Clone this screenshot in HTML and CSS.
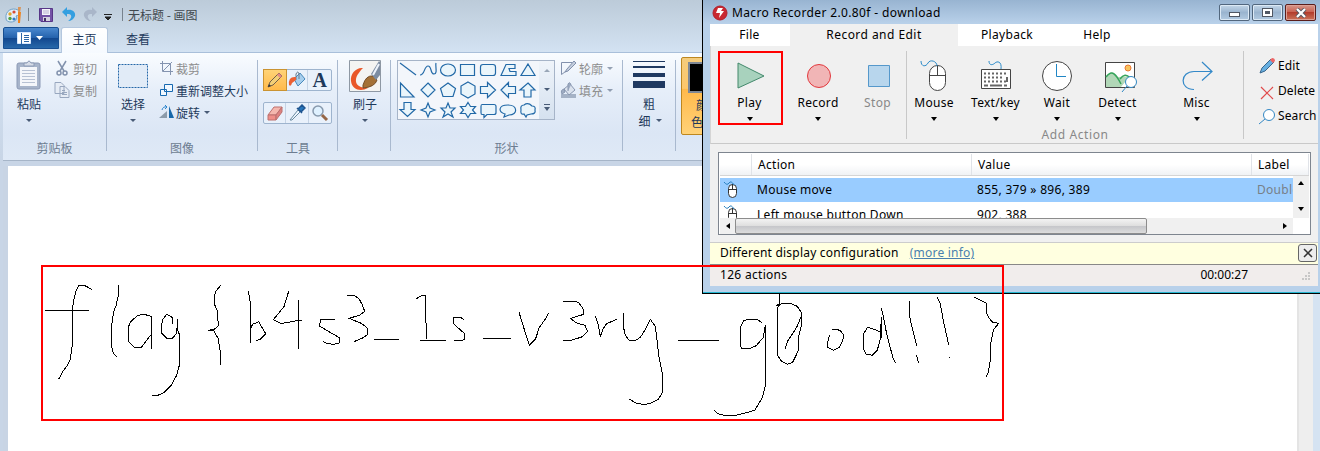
FILE: index.html
```
<!DOCTYPE html>
<html lang="zh-CN">
<head>
<meta charset="utf-8">
<title>无标题 - 画图</title>
<link rel="stylesheet" href="styles.css">
</head>
<body>
<div class="desktop">
<main class="paint">
  <header class="titlebar">
    <svg class="app-icon" width="18" height="18" viewBox="0 0 18 18"><path d="M1 12C0 5 7 1 13 4c3 3 2 5-2 6 2 3-1 6-5 6-3 0-5-1-5-4Z" fill="#e3eef7" stroke="#6fa0c7"/><circle cx="5" cy="8" r="1.7" fill="#e3a32c"/><circle cx="9" cy="6" r="1.6" fill="#d84b35"/><circle cx="5" cy="12.5" r="1.7" fill="#4f9f43"/><circle cx="9" cy="13" r="1.6" fill="#347ac4"/><path d="m13 1 3 0-1 6-2 0Z" fill="#d99559"/><path d="M13 6h3l-1 11h-2Z" fill="#ee8420"/></svg>
    <i class="title-sep"></i>
    <svg class="save" width="14" height="14" viewBox="0 0 14 14"><path d="M.5.5h13v13H2l-1.500-1.500Z" fill="#7452a6" stroke="#573687"/><path d="M3 1h8v6H3z" fill="#f4f3fa"/><path d="M4 3h6M4 5h6" stroke="#b9b0cf"/><path d="M4 9h7v4H4z" fill="#d4d1df"/><path d="M5 10h2v3H5z" fill="#443064"/></svg>
    <svg class="undo" width="14" height="15" viewBox="0 0 14 15"><path d="M0 5 5 0v3c5-1 9 2 8 6-1 3-4 5-7 5 3-2 5-6 1-7H5v3Z" fill="#349fe0"/></svg>
    <svg class="redo" width="14" height="15" viewBox="0 0 14 15"><path d="M14 5 9 0v3C4 2 0 5 1 9c1 3 4 5 7 5-3-2-5-6-1-7h2v3Z" fill="#a9b6c9"/></svg>
    <svg class="quick" width="8" height="7" viewBox="0 0 8 7"><path d="M0 .5h8M1 3h6L4 6Z" stroke="#222" fill="#222"/></svg>
    <i class="title-sep"></i>
    <span>无标题 - 画图</span>
  </header>
  <nav class="tabs">
    <button class="file-tab"><svg width="28" height="13" viewBox="0 0 28 13"><path d="M.5.5h13v11H.5z" fill="#fff" stroke="#d4e7ff"/><path d="M4.500 1v11" stroke="#2c66a7"/><path d="M7 3.500h5M7 5.500h5M7 7.500h5M7 9.500h5" stroke="#2c66a7"/><path d="M19 4h7l-3.500 4Z" fill="#fff"/></svg></button>
    <span class="tab current">主页</span><span class="tab">查看</span>
  </nav>
  <section class="ribbon">
    <div class="group clipboard">
      <div class="tools-row">
        <div class="big paste">
          <svg width="26" height="31" viewBox="0 0 26 31"><rect x="1" y="3" width="23" height="26" rx="2" fill="#a7b4ca" stroke="#8c9ab5"/><path d="M4 7h17v19H4z" fill="#f4f6fa"/><path d="M8 6V3h3q2-4 4 0h3v3Z" fill="#d6dce7" stroke="#8c9ab5"/><path d="M6 10.500h13M6 13.500h13M6 16.500h13M6 19.500h13M6 22.500h13" stroke="#b7c1d3"/></svg>
          <span>粘贴</span><i class="arrow"></i></div>
        <div class="commands off">
          <div><svg width="16" height="16" viewBox="0 0 16 16" fill="none" stroke="#8292ad" stroke-width="1.500"><path d="m4 1 6 10M12 1 6 11"/><circle cx="5" cy="13" r="2"/><circle cx="11" cy="13" r="2"/></svg>剪切</div>
          <div><svg width="16" height="16" viewBox="0 0 16 16" fill="#e6ecf5" stroke="#98a7bf"><path d="M1 .5h6l3 3v8H1ZM6 4.500h5l4 4v7H6Z"/><path d="M8 8.500h3M8 10.500h5M8 12.500h5"/></svg>复制</div>
        </div>
      </div><span class="group-name">剪贴板</span>
    </div>
    <div class="group image">
      <div class="tools-row">
        <div class="big"><svg width="32" height="31" viewBox="0 0 32 31"><path d="M1.500 4.500h29v23h-29z" fill="#e1ebf7" stroke="#2467a8" stroke-dasharray="2 1"/></svg><span>选择</span><i class="arrow"></i></div>
        <div class="commands">
          <div class="off"><svg width="16" height="16" viewBox="0 0 16 16" fill="none" stroke="#8494b0"><path d="M1 3.500h10.500V15M3.500 1v10.500H14M4 11l9-9"/></svg>裁剪</div>
          <div><svg width="16" height="16" viewBox="0 0 16 16" fill="#f1f8ff" stroke="#1769b0"><path d="M5.500 2.500h8v7h-8zM1.500 7.500h6v6h-6z"/></svg>重新调整大小</div>
          <div><svg width="16" height="16" viewBox="0 0 16 16"><path d="M0 14 8 7v7Z" fill="#8c9baa"/><path d="m10 2 5 12h-5Z" fill="#1768aa"/><path d="M3 6q1-4 5-3M6 1l2 2-2 2" fill="none" stroke="#2c86cf"/></svg>旋转<i class="arrow"></i></div>
        </div>
      </div><span class="group-name">图像</span>
    </div>
    <div class="group tools">
      <div class="tool-stack">
        <div class="tool-row">
          <span class="tool active"><svg width="18" height="18" viewBox="0 0 18 18"><path d="m2 16 2-5 9-9 3 3-9 9Z" fill="#f3cf76" stroke="#725f48"/><path d="m11 4 2-2 3 3-2 2Z" fill="#e48a83"/><path d="m2 16 1-3 2 2Z" fill="#333"/></svg></span>
          <span class="tool"><svg width="19" height="18" viewBox="0 0 19 18"><path d="m7 8 6-6 5 6-7 7Z" fill="#a8cfee" stroke="#4889bb"/><path d="M9 9V3q2-4 3 0v5" fill="none" stroke="#687b8b"/><path d="M9 6Q1 5 2 14q2 2 3-2l4-3Z" fill="#ec6033"/></svg></span>
          <span class="tool letter">A</span>
        </div>
        <div class="tool-row">
          <span class="tool"><svg width="18" height="18" viewBox="0 0 18 18"><path d="m2 11 6-8h8l-6 8Z" fill="#f4b7ae" stroke="#bc706e"/><path d="M2 11h8v5H2Z" fill="#ef8e88" stroke="#bc706e"/><path d="m10 11 6-8v5l-6 8Z" fill="#dd8180" stroke="#bc706e"/></svg></span>
          <span class="tool"><svg width="18" height="18" viewBox="0 0 18 18"><path d="m2 16 8-10 2 2-8 8Z" fill="#eef7ff" stroke="#69899f"/><path d="m9 4 5 5M10 5l4-4 3 3-4 4Z" fill="#2776bb" stroke="#1f548f" stroke-width="1.500"/></svg></span>
          <span class="tool"><svg width="18" height="18" viewBox="0 0 18 18"><circle cx="7" cy="7" r="5" fill="#dff1ff" stroke="#8799ad" stroke-width="1.500"/><path d="m11 11 5 5" stroke="#956747" stroke-width="3"/></svg></span>
        </div>
      </div><span class="group-name">工具</span>
    </div>
    <div class="group brush"><div class="big"><svg width="32" height="32" viewBox="0 0 32 32"><path d="M.5.5h31v31H.5z" fill="#f4f4f2" stroke="#8e98a4"/><path d="M14 8C7 7 1 14 2 21c1 9 10 11 17 7-8 0-13-3-12-9 1-5 4-7 5-9Z" fill="#e95829"/><path d="M14 25q3-10 10-9l4 4q-2 7-14 8Z" fill="#a47136" stroke="#744d27"/><path d="m22 14 8-13 1 1v13l-4 5Z" fill="#7d8da2"/><path d="m24 15 6-11" stroke="#edf3fb" stroke-width="2"/></svg><span>刷子</span><i class="arrow"></i></div></div>
    <div class="group shapes">
      <div class="shape-body">
        <div class="gallery">
          <svg width="141" height="58" viewBox="398 61 141 58" fill="#eaf5fb" stroke="#2269a7" stroke-width="1.200"><path d="m400 63 16 12"/><path d="M420 75c5 0 4-9 8-9s2 8 6 8 1-8 2-11" fill="none"/><ellipse cx="448" cy="70" rx="7.500" ry="6"/><path d="M460.500 64.500h14v11h-14z"/><rect x="480.500" y="64.500" width="15" height="11" rx="2.500"/><path d="M501 75.500 506 64.500h9v4h-6l1 3h6v4ZM528 64l7 11.500h-14ZM400.500 83v14H414ZM428 83l7 7-7 7-7-7ZM448 83l7.500 5.500-2.500 8h-10l-2.500-8ZM468 82l7 4v8l-7 4-7-4v-8ZM480.500 86.500h7v-4l8 7.500-8 7.500v-4h-7ZM515.500 86.500h-7v-4L501 90l7.500 7.500v-4h7ZM528 83l7 7h-4v7h-7v-7h-4ZM404 102.500h7v7h4l-7.500 7-7.500-7h4ZM428 103l2 5 5 2-5 2-2 5-2-5-5-2 5-2ZM448 103l2 5h5l-4 4 2 5-5-3-5 3 2-5-4-4h5ZM468 102.500l2.500 4h5l-3 3.500 3 3.500h-5l-2.500 4-2.500-4h-5l3-3.500-3-3.500h5Z"/><path d="M482 104.500h12q2 0 2 2v6q0 2-2 2h-7l-3 3v-3h-2q-1 0-1-2v-6q0-2 1-2Z"/><path d="M505 114l-1 3 5-2c9 0 9-10-1-10s-10 7-3 9Z"/><path d="M524 105q4-3 8 1 4 0 3 4 1 4-4 4l-4 1-1 2-2-3q-4 1-3-4-1-5 3-5Z"/></svg>
          <div class="gallery-scroll"><i class="arrow up"></i><i class="arrow"></i><i class="arrow more"></i></div>
        </div>
        <div class="commands off">
          <div><svg width="17" height="16" viewBox="0 0 17 16" fill="none" stroke="#8291ad"><path d="M12 2.500H1.500v12L9 9"/><path d="m7 9 7-8 2 2-8 8-3 1Z" fill="#c4cedd"/></svg>轮廓<i class="arrow"></i></div>
          <div><svg width="17" height="16" viewBox="0 0 17 16"><path d="M1 12h15v4H1z" fill="#a5b2c6"/><path d="m4 7 6-5 5 6-6 5Z" fill="#dbe2ed" stroke="#8997b0"/><path d="M8 9V2q2-3 3 1M4 7Q0 8 2 12l3-2Z" fill="#9eacc3" stroke="#8997b0"/></svg>填充<i class="arrow"></i></div>
        </div>
      </div><span class="group-name">形状</span>
    </div>
    <div class="group size"><svg width="32" height="28" viewBox="0 0 32 28"><path d="M0 0h32v1H0zM0 5h32v2H0zM0 12h32v4H0zM0 20h32v7H0z" fill="#1f3961"/></svg><span>粗</span><span class="size-last">细<i class="arrow"></i></span></div>
    <div class="color"><i class="swatch"></i><span>颜</span><span class="color-last">色</span></div>
  </section>
  <section class="workspace">
    <div class="canvas">
      <svg class="drawing" width="1289" height="285" viewBox="8 166 1289 285">
        <g transform="translate(30 255) scale(.333333)">
          <path d="M185 103 165 92 147 91 137 110 131 138 127 165V270L121 313 112 331 98 350 88 370H84M45 166H177M266 90V117L258 153 251 170 245 212V275L250 295 260 305M364 281V184L342 178 323 181 302 200 295 216V259L313 277H334L362 240M428 206V188L410 178 399 193 394 213V234L410 250H427L440 235 443 191V225L448 238V331L439 363 424 390 401 413 383 421H367M572 91 558 108 553 124V147L562 167 565 212 554 222 535 226 552 228 564 250 571 290V329M655 108 661 145V263M661 222 668 208 686 200 707 236 691 253 679 257M776 109 762 155 730 194 753 206 805 196H815M805 135V281"/>
        </g>
        <g transform="translate(280 255) scale(.333333)">
          <path d="M164 193H123L118 213 178 248V264L160 268 139 265 129 259M202 121H223L237 131 247 150 254 169 238 181 207 190 244 205 263 220V239L246 250 222 260M282 253H357M409 131 427 121H437V152L439 252M420 256H498M551 193 541 187H520V206L553 235V253L546 256H522M609 250H693M717 171 725 198 748 271 765 254 778 216"/>
        </g>
        <g transform="translate(530 255) scale(.333333)">
          <path d="M0 269 17 252 27 219 46 192 56 174M99 139H134L146 143 159 161 161 178 122 190 137 203 165 211 173 230 155 246 127 255 99 258M196 183 204 207 211 244 219 222 230 206 260 193M280 174V215L286 240 297 256H317L331 247 346 223 361 193 375 213 380 245 386 301 394 340 398 359V410L386 432 361 445 341 449 318 444 297 432M444 256H567M696 203 682 193H652L640 198 632 215V274L635 281H657L679 272 700 247 706 211V391L697 428 675 465 650 473 617 481H584L564 476 552 465"/>
        </g>
        <g transform="translate(770 255) scale(.333333)">
          <path d="M28 116V151H18L39 145H62L82 154 95 174V209L87 239 85 287 68 322 52 328 35 319 22 300V170L25 151M95 181 80 217 53 258 45 282M186 223H201L212 228 221 240 218 258 209 276 191 286 174 278 172 264 179 240M334 232 313 223 293 217 280 237V282L288 297 307 301 322 285 331 251 334 186V248M334 159 339 179 350 237 369 309 377 324M418 137V181L428 225 440 272M439 300 446 324M501 126 511 147 522 207 531 246 536 270M612 126 649 145V174L656 188 667 201 686 205 670 225 662 267V310L654 355 648 365"/><path d="M537 307h3"/>
        </g>
      </svg>
    </div>
    <aside class="paint-scroll"></aside><aside class="paint-edge"></aside>
  </section>
</main>
<section class="macro">
  <header class="macro-title">
    <svg width="16" height="16" viewBox="0 0 16 16"><circle cx="8" cy="8" r="7" fill="#c92831" stroke="#b11f2b"/><path d="M6 3h5L9 6h3l-5 7 1-5H4Z" fill="#fff"/></svg>
    <span>Macro Recorder 2.0.80f - download</span>
    <div class="window-buttons"><button><i></i></button><button><i class="max"></i></button><button class="close"><svg width="12" height="10" viewBox="0 0 12 10"><path d="m2 1 8 8M10 1 2 9" stroke="#53555f" stroke-width="4"/><path d="m2 1 8 8M10 1 2 9" stroke="#fff" stroke-width="2.300"/></svg></button></div>
  </header>
  <div class="macro-content">
    <nav class="menu"><span class="menu-file">File</span><span class="menu-record">Record and Edit</span><span class="menu-playback">Playback</span><span class="menu-help">Help</span></nav>
    <div class="macro-ribbon">
      <div class="action play"><svg width="40" height="40" viewBox="0 0 40 40"><path d="m8 7 26 13L8 32Z" fill="#a8d2bd" stroke="#42886b"/></svg><span>Play</span><i class="black-arrow"></i></div>
      <div class="action record"><svg width="40" height="40" viewBox="0 0 40 40"><circle cx="21" cy="20" r="11.500" fill="#f1b5b6" stroke="#e2383d"/></svg><span>Record</span><i class="black-arrow"></i></div>
      <div class="action stop"><svg width="40" height="40" viewBox="0 0 40 40"><path d="M10.500 9.500h21v21h-21z" fill="#b8d6ed" stroke="#5598cb"/></svg><span>Stop</span></div>
      <div class="add-actions">
        <div class="actions-row">
          <div class="action mouse"><svg width="40" height="40" viewBox="0 0 40 40"><rect x="15.500" y="9.500" width="16" height="25" rx="8" fill="#fff" stroke="#444"/><path d="M23.500 9v10M16 19.500h15" stroke="#444"/><path d="M7 5c0 6 5 6 7 2s9-2 9 3" fill="none" stroke="#2c8bc9"/></svg><span>Mouse</span><i class="black-arrow"></i></div>
          <div class="action textkey"><svg width="40" height="40" viewBox="0 0 40 40"><path d="M5.500 13.500h29v19h-29z" fill="#fff" stroke="#444"/><path d="M8 17.500h23M8 21.500h20M8 25.500h23" stroke="#666" stroke-width="2" stroke-dasharray="2 2"/><path d="M8 29.500h4m2 0h12m2 0h3M31 21v5" stroke="#666" stroke-width="2"/><path d="M13 5c0 5 4 4 6 2s7-2 6 6" fill="none" stroke="#2c8bc9"/></svg><span>Text/key</span><i class="black-arrow"></i></div>
          <div class="action wait"><svg width="40" height="40" viewBox="0 0 40 40"><circle cx="20" cy="20" r="14.500" fill="#fff" stroke="#444"/><path d="M19.500 8v12.500H29" fill="none" stroke="#2086c5"/></svg><span>Wait</span><i class="black-arrow"></i></div>
          <div class="action detect"><svg width="40" height="40" viewBox="0 0 40 40"><path d="M7.500 6.500h29v25h-29z" fill="#fff" stroke="#444"/><path d="M8 21q6-9 12 0 6 0 12-1l-9 11H8Z" fill="#b1d7b7"/><path d="M8 21c6-9 11-1 15 7M22 23q5-7 10-1" fill="none" stroke="#36a45b" stroke-width="1.500"/><circle cx="30" cy="12" r="3" fill="#f9c45e" stroke="#e97834"/><circle cx="33" cy="26" r="5.500" fill="#fff" stroke="#3088c3"/><path d="m29 30-5 6" stroke="#3088c3"/></svg><span>Detect</span><i class="black-arrow"></i></div>
          <div class="action misc"><svg width="40" height="40" viewBox="0 0 40 40"><path d="M17 33.500c-15 0-14-18 0-18h17M25 6l10 9.500-10 9" fill="none" stroke="#3489c8" stroke-width="1.200"/></svg><span>Misc</span><i class="black-arrow"></i></div>
        </div><span class="add-label">Add Action</span>
      </div>
      <div class="edit-commands">
        <div><svg width="18" height="18" viewBox="0 0 18 18"><path d="m2 16 2-5L13 2l3 3-9 9Z" fill="#66afe1" stroke="#38658b"/><path d="m12 3 2-2q3 0 3 3l-2 2Z" fill="#ed6666"/></svg>Edit</div>
        <div><svg width="18" height="18" viewBox="0 0 18 18"><path d="m3 5 12 12M15 5 3 17" stroke="#e14b4c" stroke-width="1.200"/></svg>Delete</div>
        <div><svg width="18" height="18" viewBox="0 0 18 18"><circle cx="11" cy="8" r="5.500" fill="#fff" stroke="#3488c4"/><path d="m7 12-6 5" stroke="#3488c4"/></svg>Search</div>
      </div>
    </div>
    <div class="list">
      <div class="list-head"><span></span><span>Action</span><span>Value</span><span>Label</span></div>
      <div class="list-body">
        <div class="rows">
          <div class="list-row selected"><span><svg width="17" height="18" viewBox="0 0 17 18"><rect x="5.500" y="3.500" width="8" height="13" rx="4" fill="#fff" stroke="#333"/><path d="M9.500 3v5M6 8.500h7" stroke="#333"/><path d="M1 1q3 4 5 1t5 2" fill="none" stroke="#277fbf"/></svg></span><span>Mouse move</span><span>855, 379 » 896, 389</span><span class="label-cell">Double</span></div>
          <div class="list-row second"><span><svg width="17" height="18" viewBox="0 0 17 18"><rect x="5.500" y="3.500" width="8" height="13" rx="4" fill="#fff" stroke="#333"/><path d="M9.500 3v5M6 8.500h7" stroke="#333"/><path d="M1 1q3 4 5 1t5 2" fill="none" stroke="#277fbf"/></svg></span><span>Left mouse button Down</span><span>902, 388</span><span></span></div>
        </div>
        <div class="vscroll"><i class="black-arrow up"></i><i class="black-arrow"></i></div>
      </div>
      <div class="hscroll"><i class="black-arrow left"></i><i class="thumb"></i><i class="black-arrow right"></i></div>
    </div>
    <div class="notice">Different display configuration <a>(more info)</a><button><svg width="12" height="12" viewBox="0 0 12 12"><path d="m2 2 8 8M10 2 2 10" stroke="#333" stroke-width="1.500"/></svg></button></div>
    <footer class="status"><span>126 actions</span><span>00:00:27</span><svg width="10" height="10" viewBox="0 0 10 10"><path d="M7 2h2M4 5h2m1 0h2M1 8h2m1 0h2m1 0h2" stroke="#bbb" stroke-width="1.500"/></svg></footer>
  </div>
</section>
<i class="annotation play-mark"></i><i class="annotation drawing-mark"></i>
</div>
</body>
</html>
```
FILE: styles.css
```
* { box-sizing: border-box; }
body { margin: 0; overflow: hidden; font-family: "Noto Sans CJK SC", sans-serif; font-size: 12px; color: #1e395b; }
button { font: inherit; padding: 0; }
svg { display: block; flex-shrink: 0; }
.desktop { position: relative; width: 1320px; height: 451px; overflow: hidden; }
.paint { height: 451px; display: flex; flex-direction: column; background: linear-gradient(#bccbd9, #d3e2f2 52px, #c8d5e6 161px); }
.titlebar { height: 27px; padding: 2px 0 0 5px; display: flex; align-items: center; color: #41484e; }
.titlebar span { margin-left: 5px; }
.title-sep { width: 1px; height: 13px; background: #77828d; }
.app-icon { margin-right: 5px; }
.save { margin-left: 10px; }
.undo { margin-left: 9px; }
.redo { margin-left: 7px; }
.quick { margin: 5px 10px 0 7px; }
.tabs { height: 26px; display: flex; padding-left: 3px; border-bottom: 1px solid #a9bfda; }
.file-tab { width: 56px; height: 22px; border: 1px solid #174e91; border-radius: 2px 2px 0 0; background: linear-gradient(#4a88ce, #2461ab 50%, #12478e 51%, #2768aa); display: flex; align-items: center; justify-content: center; }
.tab { width: 47px; margin: 0 0 0 2px; height: 26px; line-height: 24px; text-align: center; }
.tab.current { height: 26px; line-height: 22px; background: linear-gradient(#fff, #f6faff); border: 1px solid #b4c7de; border-bottom: 0; border-radius: 3px 3px 0 0; }
.tab:last-child { width: 56px; }
.ribbon { margin-left: 3px; height: 108px; display: flex; background: linear-gradient(#f9fcff, #e6eef9 35%, #dbe6f5 75%, #dfe9f6); border-bottom: 1px solid #a6b5c8; }
.group { margin-top: 7px; border-right: 1px solid #a9b9cf; flex-shrink: 0; height: 91px; }
.group-name { display: block; text-align: center; color: #6d7d91; line-height: 16px; }
.tools-row { display: flex; height: 80px; }
.big { display: flex; flex-direction: column; align-items: center; height: 80px; }
.big span { line-height: 18px; margin-top: 4px; }
.arrow { display: block; width: 0; height: 0; border: 3px solid transparent; border-top-color: #485b76; border-bottom: 0; }
.arrow.up { transform: rotate(180deg); opacity: .5; }
.big .arrow { margin-top: 6px; }
.clipboard { width: 104px; }
.paste { width: 46px; margin-left: 3px; }
.tools-row { gap: 3px; }
.commands { display: flex; flex-direction: column; color: #1e395b; margin-top: -3px; }
.commands > div { height: 22px; display: flex; align-items: center; white-space: nowrap; }
.commands svg { margin-right: 3px; }
.commands .arrow { margin-left: 4px; flex-shrink: 0; }
.off { color: #8d8d8d !important; }
.off .arrow { opacity: .55; }
.clipboard .commands { margin-left: -1px; }
.image { width: 151px; }
.image .big { width: 48px; margin-left: 2px; }
.image .commands { margin-left: -1px; }
.image .commands svg { margin-right: 1px; }
.tools { width: 80px; padding: 9px 0 0 5px; }
.tool-stack { display: flex; flex-direction: column; gap: 11px; height: 71px; }
.tools .group-name { padding-right: 4px; }
.tool-row { width: 69px; height: 22px; border: 1px solid #9eb4ce; border-radius: 2px; display: flex; background: #e9f1fb; }
.tool { width: 23px; display: flex; align-items: center; justify-content: center; border-right: 1px solid #c5d3e5; }
.tool:last-child { border-right: 0; }
.tool.active { margin: -1px; width: 24px; background: linear-gradient(#ffd377, #ffba4b); border: 1px solid #ca9332; }
.letter { font: bold 20px/20px "Liberation Serif", serif; }
.brush { width: 53px; }
.brush .big { padding-left: 2px; }
.brush .big span { margin-top: 3px; }
.shapes { width: 232px; }
.shape-body { display: flex; height: 80px; gap: 5px; padding-left: 6px; }
.shape-body .commands svg { margin-right: 2px; }
.gallery { width: 158px; height: 60px; border: 1px solid #a6b4c8; display: flex; background: #f3f6fb; }
.gallery-scroll { width: 15px; background: linear-gradient(#eff4fa, #d5e1ef); display: flex; flex-direction: column; align-items: center; justify-content: space-around; }
.more { border-top-width: 4px; position: relative; }
.more::before { content: ""; position: absolute; left: -3px; top: -7px; width: 6px; height: 1px; background: #485b76; }
.size { width: 53px; display: flex; flex-direction: column; align-items: center; padding-top: 1px; }
.size span { line-height: 17px; margin-top: 6px; }
.size .size-last { margin-top: 0; display: flex; align-items: center; gap: 5px; padding-left: 2px; }
.color { width: 44px; height: 78px; margin: 4px 0 0 5px; padding: 4px 0 0 6px; border: 1px solid #bd871f; border-radius: 2px; background: linear-gradient(#f4cc7d, #ffc76a 40%, #ffb94b 41%, #ffd278); }
.swatch { display: block; width: 32px; height: 31px; border: 2px solid #7e8794; background: #000; }
.color span { display: block; margin-left: 8px; line-height: 17px; margin-top: 3px; }
.color .color-last { margin: 0 0 0 3px; }
.workspace { height: 285px; margin: 5px 0 0 3px; padding-left: 5px; display: flex; background: #c8d4e4; }
.canvas { width: 1289px; background: #fff; flex-shrink: 0; }
.drawing path { fill: none; stroke: #000; stroke-width: 1px; vector-effect: non-scaling-stroke; shape-rendering: crispEdges; }
.paint-scroll { width: 16px; background: #eee; border-left: 2px solid #e4e4e4; }
.paint-edge { width: 7px; background: #d5e3f2; }
.macro { position: absolute; left: 702px; top: 0; width: 618px; height: 294px; border: solid #000; border-width: 0 0 1px 1px; background: #b9d1ea; color: #000; font-family: "Noto Sans", sans-serif; letter-spacing: .3px; display: flex; flex-direction: column; box-shadow: inset 0 -1px #26b7d1; }
.macro-title { height: 24px; padding: 1px 4px 0 9px; display: flex; align-items: center; gap: 4px; background: linear-gradient(#98b4d1, #b9d1ea); letter-spacing: .37px; }
.window-buttons { margin-left: auto; display: flex; gap: 2px; }
.window-buttons button { width: 31px; height: 17px; border: 1px solid #52677e; border-radius: 2px; background: linear-gradient(#c4d7e9, #9ab4cf 50%, #b2cae1); display: flex; align-items: center; justify-content: center; box-shadow: inset 0 0 0 1px #dce9f5; }
.window-buttons i { width: 11px; height: 5px; border: 1px solid #505763; background: white; margin-top: 4px; }
.window-buttons .max { width: 11px; height: 9px; margin: 0; border: 1px solid #505763; box-shadow: inset 0 0 0 2px white; background: #505763; }
.window-buttons .close { border-color: #5a1d1b; background: linear-gradient(#d6978b, #c9604f 49%, #b33d2d 50%, #cb745a); box-shadow: inset 0 0 0 1px #dda196; }
.macro-content { margin-left: 7px; width: 608px; height: 262px; background: #f0f0f0; }
.menu { height: 22px; display: flex; background: #fff; line-height: 22px; text-align: center; }
.menu-file { width: 79px; }
.menu-record { width: 169px; background: #f0f0f0; letter-spacing: .45px; border-left: 1px solid #fff; }
.menu-playback { width: 98px; }
.menu-help { width: 82px; }
.macro-ribbon { height: 98px; border-bottom: 1px solid #c9c9c9; border-left: 1px solid #d5d5d5; display: flex; padding: 5px 0 4px; }
.action { height: 74px; padding-top: 5px; display: flex; flex-direction: column; align-items: center; flex-shrink: 0; }
.action span { line-height: 16px; margin-top: -1px; }
.black-arrow { display: block; width: 0; height: 0; border: 3.5px solid transparent; border-top: 4px solid #000; border-bottom: 0; }
.action .black-arrow { margin-top: 6px; }
.play { width: 77px; }
.record { width: 60px; }
.stop { width: 59px; color: #888; }
.add-actions { width: 338px; border-left: 1px solid #c8c8c8; border-right: 1px solid #c8c8c8; height: 88px; margin-left: -1px; }
.actions-row { display: flex; height: 74px; }
.mouse { width: 54px; }
.textkey { width: 69px; }
.wait { width: 54px; }
.detect { width: 67px; }
.misc { width: 91px; }
.add-label { display: block; text-align: center; color: #888; line-height: 20px; letter-spacing: .6px; }
.edit-commands { flex: 1; padding: 2px 0 0 14px; overflow: hidden; letter-spacing: .1px; }
.edit-commands > div { height: 25px; display: flex; align-items: center; gap: 2px; white-space: nowrap; }
.list { margin: 8px 0 0 8px; width: 593px; height: 83px; border: 1px solid #7e858f; background: #fff; padding: 1px; overflow: hidden; }
.list-head, .list-row { display: grid; grid-template-columns: 32px 220px 280px 1fr; }
.list-head { height: 22px; background: linear-gradient(#fff 50%, #f0f2f5); border-bottom: 1px solid #d5d5d5; line-height: 21px; }
.list-head span { border-right: 1px solid #e0e3e8; padding-left: 6px; }
.list-body { display: flex; height: 42px; overflow: hidden; }
.rows { width: 573px; overflow: hidden; padding-top: 2px; }
.list-row { height: 24px; line-height: 23px; white-space: nowrap; }
.list-row span { padding-left: 5px; overflow: hidden; }
.list-row span:first-child { padding: 3px 0 0 3px; }
.selected { background: #99ccff; }
.list-row.second { height: 25px; line-height: 26px; }
.label-cell { color: #777f88; }
.vscroll { width: 16px; height: 42px; background: #f0f0f0; display: flex; flex-direction: column; justify-content: space-between; align-items: center; padding: 5px 0 7px; }
.black-arrow.up { transform: rotate(180deg); }
.hscroll { width: 573px; height: 16px; background: #f0f0f0; display: flex; align-items: center; padding: 0 5px; }
.left { transform: rotate(90deg); }
.right { transform: rotate(-90deg); margin-left: auto; }
.thumb { width: 412px; height: 16px; margin-left: 4px; border: 1px solid #8c8c8c; border-radius: 2px; background: linear-gradient(#f3f3f3, #dedede 50%, #c5c6ca 51%, #dcdcdc); }
.notice { height: 23px; margin-top: 7px; padding: 0 0 2px 10px; background: #ffffe0; border-top: 1px solid #ccc; border-bottom: 1px solid #888; display: flex; align-items: center; letter-spacing: .22px; }
.notice a { color: #4a7faf; text-decoration: underline; margin-left: 11px; }
.notice button { margin: 1px 1px 0 auto; width: 19px; height: 18px; border: 1px solid #666; border-radius: 3px; background: #ededed; display: grid; place-items: center; }
.status { height: 21px; background: #f1edec; padding: 0 7px 2px 10px; display: flex; align-items: center; }
.status span + span { margin-left: auto; letter-spacing: 0; }
.status svg { margin: 3px 0 0 53px; }
.annotation { position: absolute; border: 2px solid #f00; }
.play-mark { left: 718px; top: 51px; width: 65px; height: 74px; }
.drawing-mark { left: 41px; top: 265px; width: 963px; height: 156px; }
```
